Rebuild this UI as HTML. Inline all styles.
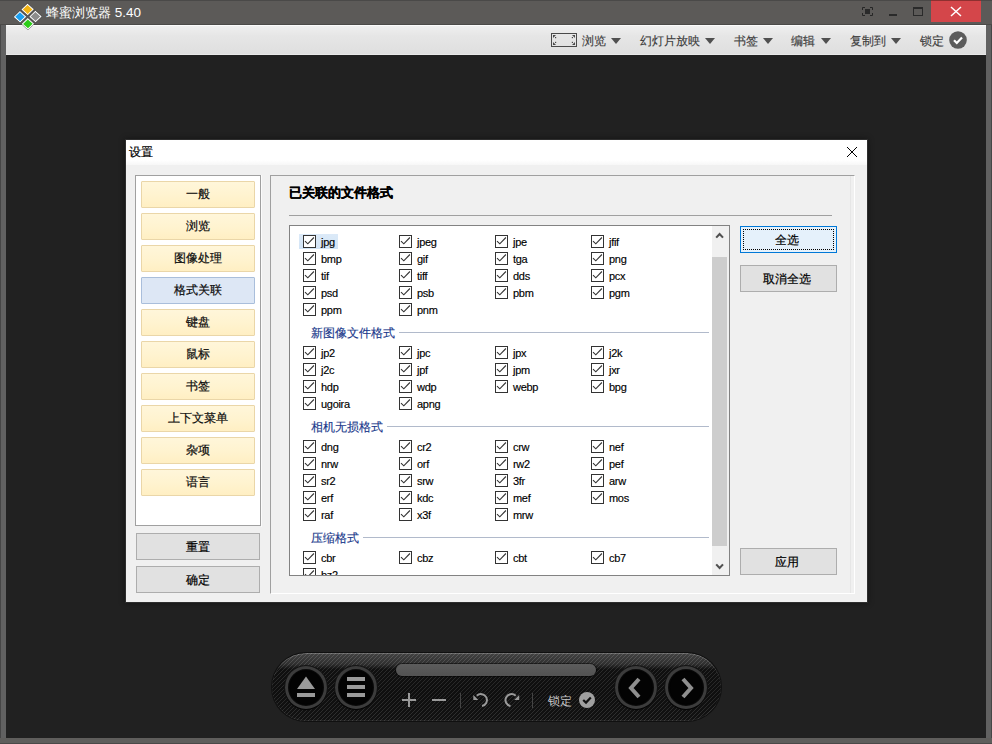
<!DOCTYPE html>
<html><head><meta charset="utf-8">
<style>
*{box-sizing:border-box;margin:0;padding:0}
html,body{width:992px;height:744px;overflow:hidden}
body{position:relative;background:#5d5c5a;font-family:'Liberation Sans',sans-serif;font-size:12px;color:#000}
.a{position:absolute}
.tbtxt{-webkit-text-stroke:0.15px #3e3e3e;position:absolute;top:32.5px;font-size:12px;color:#3e3e3e;line-height:16px;white-space:nowrap}
.tri{position:absolute;top:38px;width:0;height:0;border-left:5px solid transparent;border-right:5px solid transparent;border-top:6px solid #505050}
.nb{-webkit-text-stroke:0.2px #000;position:absolute;left:141px;width:114px;height:27px;background:linear-gradient(#fff6da,#fff3cf 55%,#ffefc3);border:1px solid #ead6a8;border-radius:1px;text-align:center;line-height:25px;font-size:12px;color:#111}
.nb.sel{background:#dde7f5;border-color:#a9bedb}
.gb{-webkit-text-stroke:0.2px #000;position:absolute;height:27px;background:#e1e1e1;border:1px solid #adadad;text-align:center;line-height:27px;font-size:12px;color:#000}
.cb{position:absolute;width:13px;height:13px;border:1px solid #333;background:#fff}
.cb svg{position:absolute;left:0;top:0}
.it{-webkit-text-stroke:0.15px #000;position:absolute;font-size:11px;letter-spacing:-0.3px;line-height:14px;color:#000;white-space:nowrap}
.hd{-webkit-text-stroke:0.15px #1b3a8c;position:absolute;font-size:12px;line-height:14px;color:#1b3a8c;white-space:nowrap}
.hl{position:absolute;height:1px;background:#b1bacb}
</style></head><body>

<div class="a" style="left:0;top:0;width:992px;height:25px;background:#5c5a58"></div>
<div class="a" style="left:0;top:24px;width:992px;height:1px;background:#4b4a48"></div>
<div class="a" style="left:0;top:0;width:992px;height:1px;background:#4a4948"></div>
<div class="a" style="left:0;top:25px;width:6px;height:719px;background:#616161;border-left:1px solid #464646"></div>
<div class="a" style="left:986px;top:25px;width:6px;height:719px;background:#616161;border-right:1px solid #464646"></div>
<div class="a" style="left:0;top:738px;width:992px;height:6px;background:#5f5e5c;border-bottom:1px solid #4a4948"></div>
<div class="a" style="left:46px;top:5px;font-size:13px;line-height:16px;color:#fff;white-space:nowrap">蜂蜜浏览器 <span style="font-size:13.5px">5.40</span></div>
<div class="a" style="left:931px;top:0;width:50px;height:22px;background:#d4464a;border-top:1px solid #8e3030"></div>
<svg class="a" style="left:950px;top:5px" width="12" height="12" viewBox="0 0 12 12"><path d="M1 2L11 11M11 2L1 11" stroke="#fff" stroke-width="1.5"/></svg>
<div class="a" style="left:913px;top:7px;width:10px;height:9px;border:1px solid #2a2a2a;border-top-width:2px"></div>
<div class="a" style="left:889px;top:14px;width:8px;height:2px;background:#2a2a2a"></div>
<svg class="a" style="left:862px;top:7px" width="12" height="10" viewBox="0 0 12 10"><path d="M0.5 3V0.5H3M8 0.5H10.5V3M10.5 6V8.5H8M3 8.5H0.5V6" fill="none" stroke="#262626" stroke-width="1"/><rect x="3" y="2" width="5" height="5" fill="#2a2a2a"/></svg>
<div class="a" style="left:6px;top:25px;width:980px;height:30px;background:linear-gradient(#efefef,#e6e6e6 35%,#dfdfdf);border-top:1px solid #fbfbfb;border-bottom:1px solid #e9e9e9"></div>
<div class="a" style="left:6px;top:55px;width:980px;height:683px;background:#212121"></div>
<svg class="a" style="left:551px;top:33px" width="26" height="14" viewBox="0 0 26 14"><rect x="0.5" y="0.5" width="25" height="13" fill="none" stroke="#4a4a4a"/><g fill="#4a4a4a"><path d="M2 2H5L2 5Z"/><rect x="4" y="4" width="1.2" height="1.2"/><path d="M24 2H21L24 5Z"/><rect x="20.8" y="4" width="1.2" height="1.2"/><path d="M2 12H5L2 9Z"/><rect x="4" y="8.8" width="1.2" height="1.2"/><path d="M24 12H21L24 9Z"/><rect x="20.8" y="8.8" width="1.2" height="1.2"/></g></svg>
<div class="tbtxt" style="left:582px">浏览</div>
<div class="tri" style="left:611px"></div>
<div class="tbtxt" style="left:640px">幻灯片放映</div>
<div class="tri" style="left:705px"></div>
<div class="tbtxt" style="left:734px">书签</div>
<div class="tri" style="left:763px"></div>
<div class="tbtxt" style="left:791px">编辑</div>
<div class="tri" style="left:821px"></div>
<div class="tbtxt" style="left:850px">复制到</div>
<div class="tri" style="left:891px"></div>
<div class="tbtxt" style="left:920px">锁定</div>
<svg class="a" style="left:949px;top:31px" width="18" height="18" viewBox="0 0 18 18"><circle cx="9" cy="9" r="8.8" fill="#5c5c5c"/><path d="M5 9.2L7.8 12L13 6.5" stroke="#fff" stroke-width="2.2" fill="none"/></svg>
<svg class="a" style="left:12px;top:2px" width="32" height="30" viewBox="0 0 32 30">
<g transform="translate(15.75,14.65) scale(1,0.93) rotate(44) scale(1.05)">
<g fill="#fff" stroke="rgba(0,0,0,0.55)" stroke-width="0.6">
<rect x="-9.6" y="-9.6" width="8.8" height="8.8"/>
<rect x="0.8" y="-9.6" width="8.8" height="8.8"/>
<rect x="-9.6" y="0.8" width="8.8" height="8.8"/>
<rect x="0.8" y="0.8" width="8.8" height="8.8"/>
</g>
<rect x="-8.4" y="-8.4" width="6.4" height="6.4" fill="#f2b312"/>
<rect x="2" y="-8.4" width="6.4" height="6.4" fill="#8c8c8c"/>
<rect x="-8.4" y="2" width="6.4" height="6.4" fill="#1a9ff0"/>
<rect x="2" y="2" width="6.4" height="6.4" fill="#2ccc18"/>
</g></svg>
<div class="a" style="left:125px;top:139px;width:743px;height:464px;background:#f0f0f0;border:1px solid #2e2e2e;box-shadow:0 0 6px rgba(0,0,0,0.45)"></div>
<div class="a" style="left:126px;top:140px;width:741px;height:25px;background:linear-gradient(#fff 80%,#f7f7f7)"></div>
<div class="a" style="left:129px;top:144px;font-size:12px;line-height:16px;color:#000;-webkit-text-stroke:0.2px #000">设置</div>
<svg class="a" style="left:846px;top:146px" width="12" height="12" viewBox="0 0 12 12"><path d="M1 1L11 11M11 1L1 11" stroke="#000" stroke-width="1"/></svg>
<div class="a" style="left:135px;top:175px;width:126px;height:351px;background:#fff;border:1px solid #a0a0a0"></div>
<div class="nb" style="top:181px">一般</div>
<div class="nb" style="top:213px">浏览</div>
<div class="nb" style="top:245px">图像处理</div>
<div class="nb sel" style="top:277px">格式关联</div>
<div class="nb" style="top:309px">键盘</div>
<div class="nb" style="top:341px">鼠标</div>
<div class="nb" style="top:373px">书签</div>
<div class="nb" style="top:405px">上下文菜单</div>
<div class="nb" style="top:437px">杂项</div>
<div class="nb" style="top:469px">语言</div>
<div class="gb" style="left:136px;top:533px;width:124px">重置</div>
<div class="gb" style="left:136px;top:566px;width:124px">确定</div>
<div class="a" style="left:270px;top:175px;width:585px;height:419px;border-top:1px solid #a0a0a0;border-left:1px solid #a0a0a0;border-right:1px solid #fff;border-bottom:1px solid #fff"></div>
<div class="a" style="left:289px;top:185px;font-size:13px;font-weight:bold;line-height:16px;color:#000;white-space:nowrap;-webkit-text-stroke:0.3px #000">已关联的文件格式</div>
<div class="a" style="left:289px;top:215px;width:543px;height:1px;background:#a0a0a0"></div>
<div class="a" style="left:850px;top:176px;width:1px;height:417px;background:#e6e6e6"></div>
<div class="a" style="left:261px;top:175px;width:1px;height:352px;background:#fbfbfb"></div>
<div class="a" style="left:289px;top:225px;width:441px;height:351px;background:#fff;border:1px solid #828282;overflow:hidden" id="lb">
<div class="a" style="left:9px;top:8px;width:39px;height:15px;background:linear-gradient(#dceaf8,#d2e4f6)"></div>
<div class="cb" style="left:13px;top:9px"><svg width="11" height="11" viewBox="0 0 11 11"><path d="M1 5.2L3.8 7.8L9.9 1.5" stroke="#333" stroke-width="1.1" fill="none"/></svg></div>
<div class="it" style="left:31px;top:9px">jpg</div>
<div class="cb" style="left:109px;top:9px"><svg width="11" height="11" viewBox="0 0 11 11"><path d="M1 5.2L3.8 7.8L9.9 1.5" stroke="#333" stroke-width="1.1" fill="none"/></svg></div>
<div class="it" style="left:127px;top:9px">jpeg</div>
<div class="cb" style="left:205px;top:9px"><svg width="11" height="11" viewBox="0 0 11 11"><path d="M1 5.2L3.8 7.8L9.9 1.5" stroke="#333" stroke-width="1.1" fill="none"/></svg></div>
<div class="it" style="left:223px;top:9px">jpe</div>
<div class="cb" style="left:301px;top:9px"><svg width="11" height="11" viewBox="0 0 11 11"><path d="M1 5.2L3.8 7.8L9.9 1.5" stroke="#333" stroke-width="1.1" fill="none"/></svg></div>
<div class="it" style="left:319px;top:9px">jfif</div>
<div class="cb" style="left:13px;top:26px"><svg width="11" height="11" viewBox="0 0 11 11"><path d="M1 5.2L3.8 7.8L9.9 1.5" stroke="#333" stroke-width="1.1" fill="none"/></svg></div>
<div class="it" style="left:31px;top:26px">bmp</div>
<div class="cb" style="left:109px;top:26px"><svg width="11" height="11" viewBox="0 0 11 11"><path d="M1 5.2L3.8 7.8L9.9 1.5" stroke="#333" stroke-width="1.1" fill="none"/></svg></div>
<div class="it" style="left:127px;top:26px">gif</div>
<div class="cb" style="left:205px;top:26px"><svg width="11" height="11" viewBox="0 0 11 11"><path d="M1 5.2L3.8 7.8L9.9 1.5" stroke="#333" stroke-width="1.1" fill="none"/></svg></div>
<div class="it" style="left:223px;top:26px">tga</div>
<div class="cb" style="left:301px;top:26px"><svg width="11" height="11" viewBox="0 0 11 11"><path d="M1 5.2L3.8 7.8L9.9 1.5" stroke="#333" stroke-width="1.1" fill="none"/></svg></div>
<div class="it" style="left:319px;top:26px">png</div>
<div class="cb" style="left:13px;top:43px"><svg width="11" height="11" viewBox="0 0 11 11"><path d="M1 5.2L3.8 7.8L9.9 1.5" stroke="#333" stroke-width="1.1" fill="none"/></svg></div>
<div class="it" style="left:31px;top:43px">tif</div>
<div class="cb" style="left:109px;top:43px"><svg width="11" height="11" viewBox="0 0 11 11"><path d="M1 5.2L3.8 7.8L9.9 1.5" stroke="#333" stroke-width="1.1" fill="none"/></svg></div>
<div class="it" style="left:127px;top:43px">tiff</div>
<div class="cb" style="left:205px;top:43px"><svg width="11" height="11" viewBox="0 0 11 11"><path d="M1 5.2L3.8 7.8L9.9 1.5" stroke="#333" stroke-width="1.1" fill="none"/></svg></div>
<div class="it" style="left:223px;top:43px">dds</div>
<div class="cb" style="left:301px;top:43px"><svg width="11" height="11" viewBox="0 0 11 11"><path d="M1 5.2L3.8 7.8L9.9 1.5" stroke="#333" stroke-width="1.1" fill="none"/></svg></div>
<div class="it" style="left:319px;top:43px">pcx</div>
<div class="cb" style="left:13px;top:60px"><svg width="11" height="11" viewBox="0 0 11 11"><path d="M1 5.2L3.8 7.8L9.9 1.5" stroke="#333" stroke-width="1.1" fill="none"/></svg></div>
<div class="it" style="left:31px;top:60px">psd</div>
<div class="cb" style="left:109px;top:60px"><svg width="11" height="11" viewBox="0 0 11 11"><path d="M1 5.2L3.8 7.8L9.9 1.5" stroke="#333" stroke-width="1.1" fill="none"/></svg></div>
<div class="it" style="left:127px;top:60px">psb</div>
<div class="cb" style="left:205px;top:60px"><svg width="11" height="11" viewBox="0 0 11 11"><path d="M1 5.2L3.8 7.8L9.9 1.5" stroke="#333" stroke-width="1.1" fill="none"/></svg></div>
<div class="it" style="left:223px;top:60px">pbm</div>
<div class="cb" style="left:301px;top:60px"><svg width="11" height="11" viewBox="0 0 11 11"><path d="M1 5.2L3.8 7.8L9.9 1.5" stroke="#333" stroke-width="1.1" fill="none"/></svg></div>
<div class="it" style="left:319px;top:60px">pgm</div>
<div class="cb" style="left:13px;top:77px"><svg width="11" height="11" viewBox="0 0 11 11"><path d="M1 5.2L3.8 7.8L9.9 1.5" stroke="#333" stroke-width="1.1" fill="none"/></svg></div>
<div class="it" style="left:31px;top:77px">ppm</div>
<div class="cb" style="left:109px;top:77px"><svg width="11" height="11" viewBox="0 0 11 11"><path d="M1 5.2L3.8 7.8L9.9 1.5" stroke="#333" stroke-width="1.1" fill="none"/></svg></div>
<div class="it" style="left:127px;top:77px">pnm</div>
<div class="hd" style="left:21px;top:100px">新图像文件格式</div>
<div class="hl" style="left:109px;top:106px;width:310px"></div>
<div class="cb" style="left:13px;top:120px"><svg width="11" height="11" viewBox="0 0 11 11"><path d="M1 5.2L3.8 7.8L9.9 1.5" stroke="#333" stroke-width="1.1" fill="none"/></svg></div>
<div class="it" style="left:31px;top:120px">jp2</div>
<div class="cb" style="left:109px;top:120px"><svg width="11" height="11" viewBox="0 0 11 11"><path d="M1 5.2L3.8 7.8L9.9 1.5" stroke="#333" stroke-width="1.1" fill="none"/></svg></div>
<div class="it" style="left:127px;top:120px">jpc</div>
<div class="cb" style="left:205px;top:120px"><svg width="11" height="11" viewBox="0 0 11 11"><path d="M1 5.2L3.8 7.8L9.9 1.5" stroke="#333" stroke-width="1.1" fill="none"/></svg></div>
<div class="it" style="left:223px;top:120px">jpx</div>
<div class="cb" style="left:301px;top:120px"><svg width="11" height="11" viewBox="0 0 11 11"><path d="M1 5.2L3.8 7.8L9.9 1.5" stroke="#333" stroke-width="1.1" fill="none"/></svg></div>
<div class="it" style="left:319px;top:120px">j2k</div>
<div class="cb" style="left:13px;top:137px"><svg width="11" height="11" viewBox="0 0 11 11"><path d="M1 5.2L3.8 7.8L9.9 1.5" stroke="#333" stroke-width="1.1" fill="none"/></svg></div>
<div class="it" style="left:31px;top:137px">j2c</div>
<div class="cb" style="left:109px;top:137px"><svg width="11" height="11" viewBox="0 0 11 11"><path d="M1 5.2L3.8 7.8L9.9 1.5" stroke="#333" stroke-width="1.1" fill="none"/></svg></div>
<div class="it" style="left:127px;top:137px">jpf</div>
<div class="cb" style="left:205px;top:137px"><svg width="11" height="11" viewBox="0 0 11 11"><path d="M1 5.2L3.8 7.8L9.9 1.5" stroke="#333" stroke-width="1.1" fill="none"/></svg></div>
<div class="it" style="left:223px;top:137px">jpm</div>
<div class="cb" style="left:301px;top:137px"><svg width="11" height="11" viewBox="0 0 11 11"><path d="M1 5.2L3.8 7.8L9.9 1.5" stroke="#333" stroke-width="1.1" fill="none"/></svg></div>
<div class="it" style="left:319px;top:137px">jxr</div>
<div class="cb" style="left:13px;top:154px"><svg width="11" height="11" viewBox="0 0 11 11"><path d="M1 5.2L3.8 7.8L9.9 1.5" stroke="#333" stroke-width="1.1" fill="none"/></svg></div>
<div class="it" style="left:31px;top:154px">hdp</div>
<div class="cb" style="left:109px;top:154px"><svg width="11" height="11" viewBox="0 0 11 11"><path d="M1 5.2L3.8 7.8L9.9 1.5" stroke="#333" stroke-width="1.1" fill="none"/></svg></div>
<div class="it" style="left:127px;top:154px">wdp</div>
<div class="cb" style="left:205px;top:154px"><svg width="11" height="11" viewBox="0 0 11 11"><path d="M1 5.2L3.8 7.8L9.9 1.5" stroke="#333" stroke-width="1.1" fill="none"/></svg></div>
<div class="it" style="left:223px;top:154px">webp</div>
<div class="cb" style="left:301px;top:154px"><svg width="11" height="11" viewBox="0 0 11 11"><path d="M1 5.2L3.8 7.8L9.9 1.5" stroke="#333" stroke-width="1.1" fill="none"/></svg></div>
<div class="it" style="left:319px;top:154px">bpg</div>
<div class="cb" style="left:13px;top:171px"><svg width="11" height="11" viewBox="0 0 11 11"><path d="M1 5.2L3.8 7.8L9.9 1.5" stroke="#333" stroke-width="1.1" fill="none"/></svg></div>
<div class="it" style="left:31px;top:171px">ugoira</div>
<div class="cb" style="left:109px;top:171px"><svg width="11" height="11" viewBox="0 0 11 11"><path d="M1 5.2L3.8 7.8L9.9 1.5" stroke="#333" stroke-width="1.1" fill="none"/></svg></div>
<div class="it" style="left:127px;top:171px">apng</div>
<div class="hd" style="left:21px;top:194px">相机无损格式</div>
<div class="hl" style="left:97px;top:200px;width:322px"></div>
<div class="cb" style="left:13px;top:214px"><svg width="11" height="11" viewBox="0 0 11 11"><path d="M1 5.2L3.8 7.8L9.9 1.5" stroke="#333" stroke-width="1.1" fill="none"/></svg></div>
<div class="it" style="left:31px;top:214px">dng</div>
<div class="cb" style="left:109px;top:214px"><svg width="11" height="11" viewBox="0 0 11 11"><path d="M1 5.2L3.8 7.8L9.9 1.5" stroke="#333" stroke-width="1.1" fill="none"/></svg></div>
<div class="it" style="left:127px;top:214px">cr2</div>
<div class="cb" style="left:205px;top:214px"><svg width="11" height="11" viewBox="0 0 11 11"><path d="M1 5.2L3.8 7.8L9.9 1.5" stroke="#333" stroke-width="1.1" fill="none"/></svg></div>
<div class="it" style="left:223px;top:214px">crw</div>
<div class="cb" style="left:301px;top:214px"><svg width="11" height="11" viewBox="0 0 11 11"><path d="M1 5.2L3.8 7.8L9.9 1.5" stroke="#333" stroke-width="1.1" fill="none"/></svg></div>
<div class="it" style="left:319px;top:214px">nef</div>
<div class="cb" style="left:13px;top:231px"><svg width="11" height="11" viewBox="0 0 11 11"><path d="M1 5.2L3.8 7.8L9.9 1.5" stroke="#333" stroke-width="1.1" fill="none"/></svg></div>
<div class="it" style="left:31px;top:231px">nrw</div>
<div class="cb" style="left:109px;top:231px"><svg width="11" height="11" viewBox="0 0 11 11"><path d="M1 5.2L3.8 7.8L9.9 1.5" stroke="#333" stroke-width="1.1" fill="none"/></svg></div>
<div class="it" style="left:127px;top:231px">orf</div>
<div class="cb" style="left:205px;top:231px"><svg width="11" height="11" viewBox="0 0 11 11"><path d="M1 5.2L3.8 7.8L9.9 1.5" stroke="#333" stroke-width="1.1" fill="none"/></svg></div>
<div class="it" style="left:223px;top:231px">rw2</div>
<div class="cb" style="left:301px;top:231px"><svg width="11" height="11" viewBox="0 0 11 11"><path d="M1 5.2L3.8 7.8L9.9 1.5" stroke="#333" stroke-width="1.1" fill="none"/></svg></div>
<div class="it" style="left:319px;top:231px">pef</div>
<div class="cb" style="left:13px;top:248px"><svg width="11" height="11" viewBox="0 0 11 11"><path d="M1 5.2L3.8 7.8L9.9 1.5" stroke="#333" stroke-width="1.1" fill="none"/></svg></div>
<div class="it" style="left:31px;top:248px">sr2</div>
<div class="cb" style="left:109px;top:248px"><svg width="11" height="11" viewBox="0 0 11 11"><path d="M1 5.2L3.8 7.8L9.9 1.5" stroke="#333" stroke-width="1.1" fill="none"/></svg></div>
<div class="it" style="left:127px;top:248px">srw</div>
<div class="cb" style="left:205px;top:248px"><svg width="11" height="11" viewBox="0 0 11 11"><path d="M1 5.2L3.8 7.8L9.9 1.5" stroke="#333" stroke-width="1.1" fill="none"/></svg></div>
<div class="it" style="left:223px;top:248px">3fr</div>
<div class="cb" style="left:301px;top:248px"><svg width="11" height="11" viewBox="0 0 11 11"><path d="M1 5.2L3.8 7.8L9.9 1.5" stroke="#333" stroke-width="1.1" fill="none"/></svg></div>
<div class="it" style="left:319px;top:248px">arw</div>
<div class="cb" style="left:13px;top:265px"><svg width="11" height="11" viewBox="0 0 11 11"><path d="M1 5.2L3.8 7.8L9.9 1.5" stroke="#333" stroke-width="1.1" fill="none"/></svg></div>
<div class="it" style="left:31px;top:265px">erf</div>
<div class="cb" style="left:109px;top:265px"><svg width="11" height="11" viewBox="0 0 11 11"><path d="M1 5.2L3.8 7.8L9.9 1.5" stroke="#333" stroke-width="1.1" fill="none"/></svg></div>
<div class="it" style="left:127px;top:265px">kdc</div>
<div class="cb" style="left:205px;top:265px"><svg width="11" height="11" viewBox="0 0 11 11"><path d="M1 5.2L3.8 7.8L9.9 1.5" stroke="#333" stroke-width="1.1" fill="none"/></svg></div>
<div class="it" style="left:223px;top:265px">mef</div>
<div class="cb" style="left:301px;top:265px"><svg width="11" height="11" viewBox="0 0 11 11"><path d="M1 5.2L3.8 7.8L9.9 1.5" stroke="#333" stroke-width="1.1" fill="none"/></svg></div>
<div class="it" style="left:319px;top:265px">mos</div>
<div class="cb" style="left:13px;top:282px"><svg width="11" height="11" viewBox="0 0 11 11"><path d="M1 5.2L3.8 7.8L9.9 1.5" stroke="#333" stroke-width="1.1" fill="none"/></svg></div>
<div class="it" style="left:31px;top:282px">raf</div>
<div class="cb" style="left:109px;top:282px"><svg width="11" height="11" viewBox="0 0 11 11"><path d="M1 5.2L3.8 7.8L9.9 1.5" stroke="#333" stroke-width="1.1" fill="none"/></svg></div>
<div class="it" style="left:127px;top:282px">x3f</div>
<div class="cb" style="left:205px;top:282px"><svg width="11" height="11" viewBox="0 0 11 11"><path d="M1 5.2L3.8 7.8L9.9 1.5" stroke="#333" stroke-width="1.1" fill="none"/></svg></div>
<div class="it" style="left:223px;top:282px">mrw</div>
<div class="hd" style="left:21px;top:305px">压缩格式</div>
<div class="hl" style="left:73px;top:311px;width:346px"></div>
<div class="cb" style="left:13px;top:325px"><svg width="11" height="11" viewBox="0 0 11 11"><path d="M1 5.2L3.8 7.8L9.9 1.5" stroke="#333" stroke-width="1.1" fill="none"/></svg></div>
<div class="it" style="left:31px;top:325px">cbr</div>
<div class="cb" style="left:109px;top:325px"><svg width="11" height="11" viewBox="0 0 11 11"><path d="M1 5.2L3.8 7.8L9.9 1.5" stroke="#333" stroke-width="1.1" fill="none"/></svg></div>
<div class="it" style="left:127px;top:325px">cbz</div>
<div class="cb" style="left:205px;top:325px"><svg width="11" height="11" viewBox="0 0 11 11"><path d="M1 5.2L3.8 7.8L9.9 1.5" stroke="#333" stroke-width="1.1" fill="none"/></svg></div>
<div class="it" style="left:223px;top:325px">cbt</div>
<div class="cb" style="left:301px;top:325px"><svg width="11" height="11" viewBox="0 0 11 11"><path d="M1 5.2L3.8 7.8L9.9 1.5" stroke="#333" stroke-width="1.1" fill="none"/></svg></div>
<div class="it" style="left:319px;top:325px">cb7</div>
<div class="cb" style="left:13px;top:342px"><svg width="11" height="11" viewBox="0 0 11 11"><path d="M1 5.2L3.8 7.8L9.9 1.5" stroke="#333" stroke-width="1.1" fill="none"/></svg></div>
<div class="it" style="left:31px;top:342px">bz2</div>
<div class="a" style="left:422px;top:0;width:17px;height:349px;background:#f0f0f0"></div>
<div class="a" style="left:422px;top:31px;width:15px;height:289px;background:#cdcdcd"></div>
<svg class="a" style="left:425px;top:5px" width="10" height="8" viewBox="0 0 10 8"><path d="M1.2 6.6L4.6 3L8 6.6" stroke="#505050" stroke-width="2.1" fill="none"/></svg>
<svg class="a" style="left:425px;top:337px" width="10" height="8" viewBox="0 0 10 8"><path d="M1.2 1.4L4.6 5L8 1.4" stroke="#505050" stroke-width="2.1" fill="none"/></svg>
</div>
<div class="gb" style="left:740px;top:226px;width:97px;padding-right:3px;background:#e5f1fb;border-color:#0078d7"><div class="a" style="left:2px;top:2px;right:2px;bottom:2px;border:1px dotted #000"></div>全选</div>
<div class="gb" style="left:740px;top:265px;width:97px;padding-right:3px">取消全选</div>
<div class="gb" style="left:740px;top:548px;width:97px;padding-right:3px">应用</div>
<div class="a" style="left:271px;top:652px;width:451px;height:70px;border-radius:35px;background:#101010"></div>
<div class="a" style="left:272px;top:653px;width:449px;height:68px;border-radius:34px;background:#171717;overflow:hidden">
<div class="a" style="left:0;top:0;width:449px;height:68px;background:repeating-linear-gradient(-45deg,#333 0 1.1px,#131313 1.1px 2.83px)"></div>
<div class="a" style="left:0;top:0;width:449px;height:68px;border-radius:34px;background:linear-gradient(rgba(255,255,255,0.20),rgba(255,255,255,0.12) 16%,rgba(0,0,0,0.15) 24%,rgba(0,0,0,0.22) 60%,rgba(0,0,0,0.05))"></div>
<div class="a" style="left:0;top:0;width:449px;height:68px;border-radius:34px;box-shadow:inset 0 1px 0 rgba(255,255,255,0.22),inset 0 -1px 0 rgba(255,255,255,0.08)"></div>
</div>
<div class="a" style="left:285px;top:666px;width:42px;height:43px;border-radius:50%;background:#030303;border:3px solid #3c3c3c;box-shadow:0 1px 1px #000,0 0 0 1px #151515,inset 0 0 1px 1px #0c0c0c"></div>
<div class="a" style="left:335px;top:666px;width:42px;height:43px;border-radius:50%;background:#030303;border:3px solid #3c3c3c;box-shadow:0 1px 1px #000,0 0 0 1px #151515,inset 0 0 1px 1px #0c0c0c"></div>
<div class="a" style="left:615px;top:666px;width:42px;height:43px;border-radius:50%;background:#030303;border:3px solid #3c3c3c;box-shadow:0 1px 1px #000,0 0 0 1px #151515,inset 0 0 1px 1px #0c0c0c"></div>
<div class="a" style="left:665px;top:666px;width:42px;height:43px;border-radius:50%;background:#030303;border:3px solid #3c3c3c;box-shadow:0 1px 1px #000,0 0 0 1px #151515,inset 0 0 1px 1px #0c0c0c"></div>
<svg class="a" style="left:296px;top:676px" width="20" height="22" viewBox="0 0 20 22"><path d="M10 0.5L19 13H1Z" fill="#9a9a9a"/><rect x="1" y="17" width="18" height="4" fill="#9a9a9a"/></svg>
<svg class="a" style="left:347px;top:677px" width="18" height="21" viewBox="0 0 18 21"><rect x="0" y="0" width="18" height="4" fill="#9a9a9a"/><rect x="0" y="8" width="18" height="4" fill="#9a9a9a"/><rect x="0" y="16" width="18" height="4" fill="#9a9a9a"/></svg>
<svg class="a" style="left:624px;top:676px" width="24" height="24" viewBox="0 0 24 24"><path d="M15 3L7 12L15 21" stroke="#8f8f8f" stroke-width="4" fill="none"/></svg>
<svg class="a" style="left:674px;top:676px" width="24" height="24" viewBox="0 0 24 24"><path d="M9 3L17 12L9 21" stroke="#8f8f8f" stroke-width="4" fill="none"/></svg>
<div class="a" style="left:396px;top:664px;width:200px;height:12px;border-radius:6px;background:linear-gradient(#5c5c5c,#525252);box-shadow:0 0 0 1px rgba(0,0,0,0.45)"></div>
<svg class="a" style="left:400px;top:691px" width="200" height="20" viewBox="0 0 200 20"><path d="M2 9H16M9 2V16M32 9H46" stroke="#9a9a9a" stroke-width="2"/><path d="M60.5 2V17M132.5 2V17" stroke="#444" stroke-width="1"/><path d="M76.8 4.8A6 6 0 1 1 82 15" stroke="#9a9a9a" stroke-width="2" fill="none"/><path d="M73.3 4V9.1H78.3Z" fill="#9a9a9a"/><path d="M115.7 4.8A6 6 0 1 0 110.5 15" stroke="#9a9a9a" stroke-width="2" fill="none"/><path d="M119.2 4V9.1H114.2Z" fill="#9a9a9a"/></svg>
<div class="a" style="left:548px;top:693px;font-size:12px;line-height:16px;color:#c8c8c8;white-space:nowrap">锁定</div>
<svg class="a" style="left:578px;top:691px" width="18" height="18" viewBox="0 0 18 18"><circle cx="9" cy="9" r="8" fill="#a0a0a0"/><path d="M5.2 9L8 11.6L12.8 6.6" stroke="#111" stroke-width="2.2" fill="none"/></svg>
</body></html>
